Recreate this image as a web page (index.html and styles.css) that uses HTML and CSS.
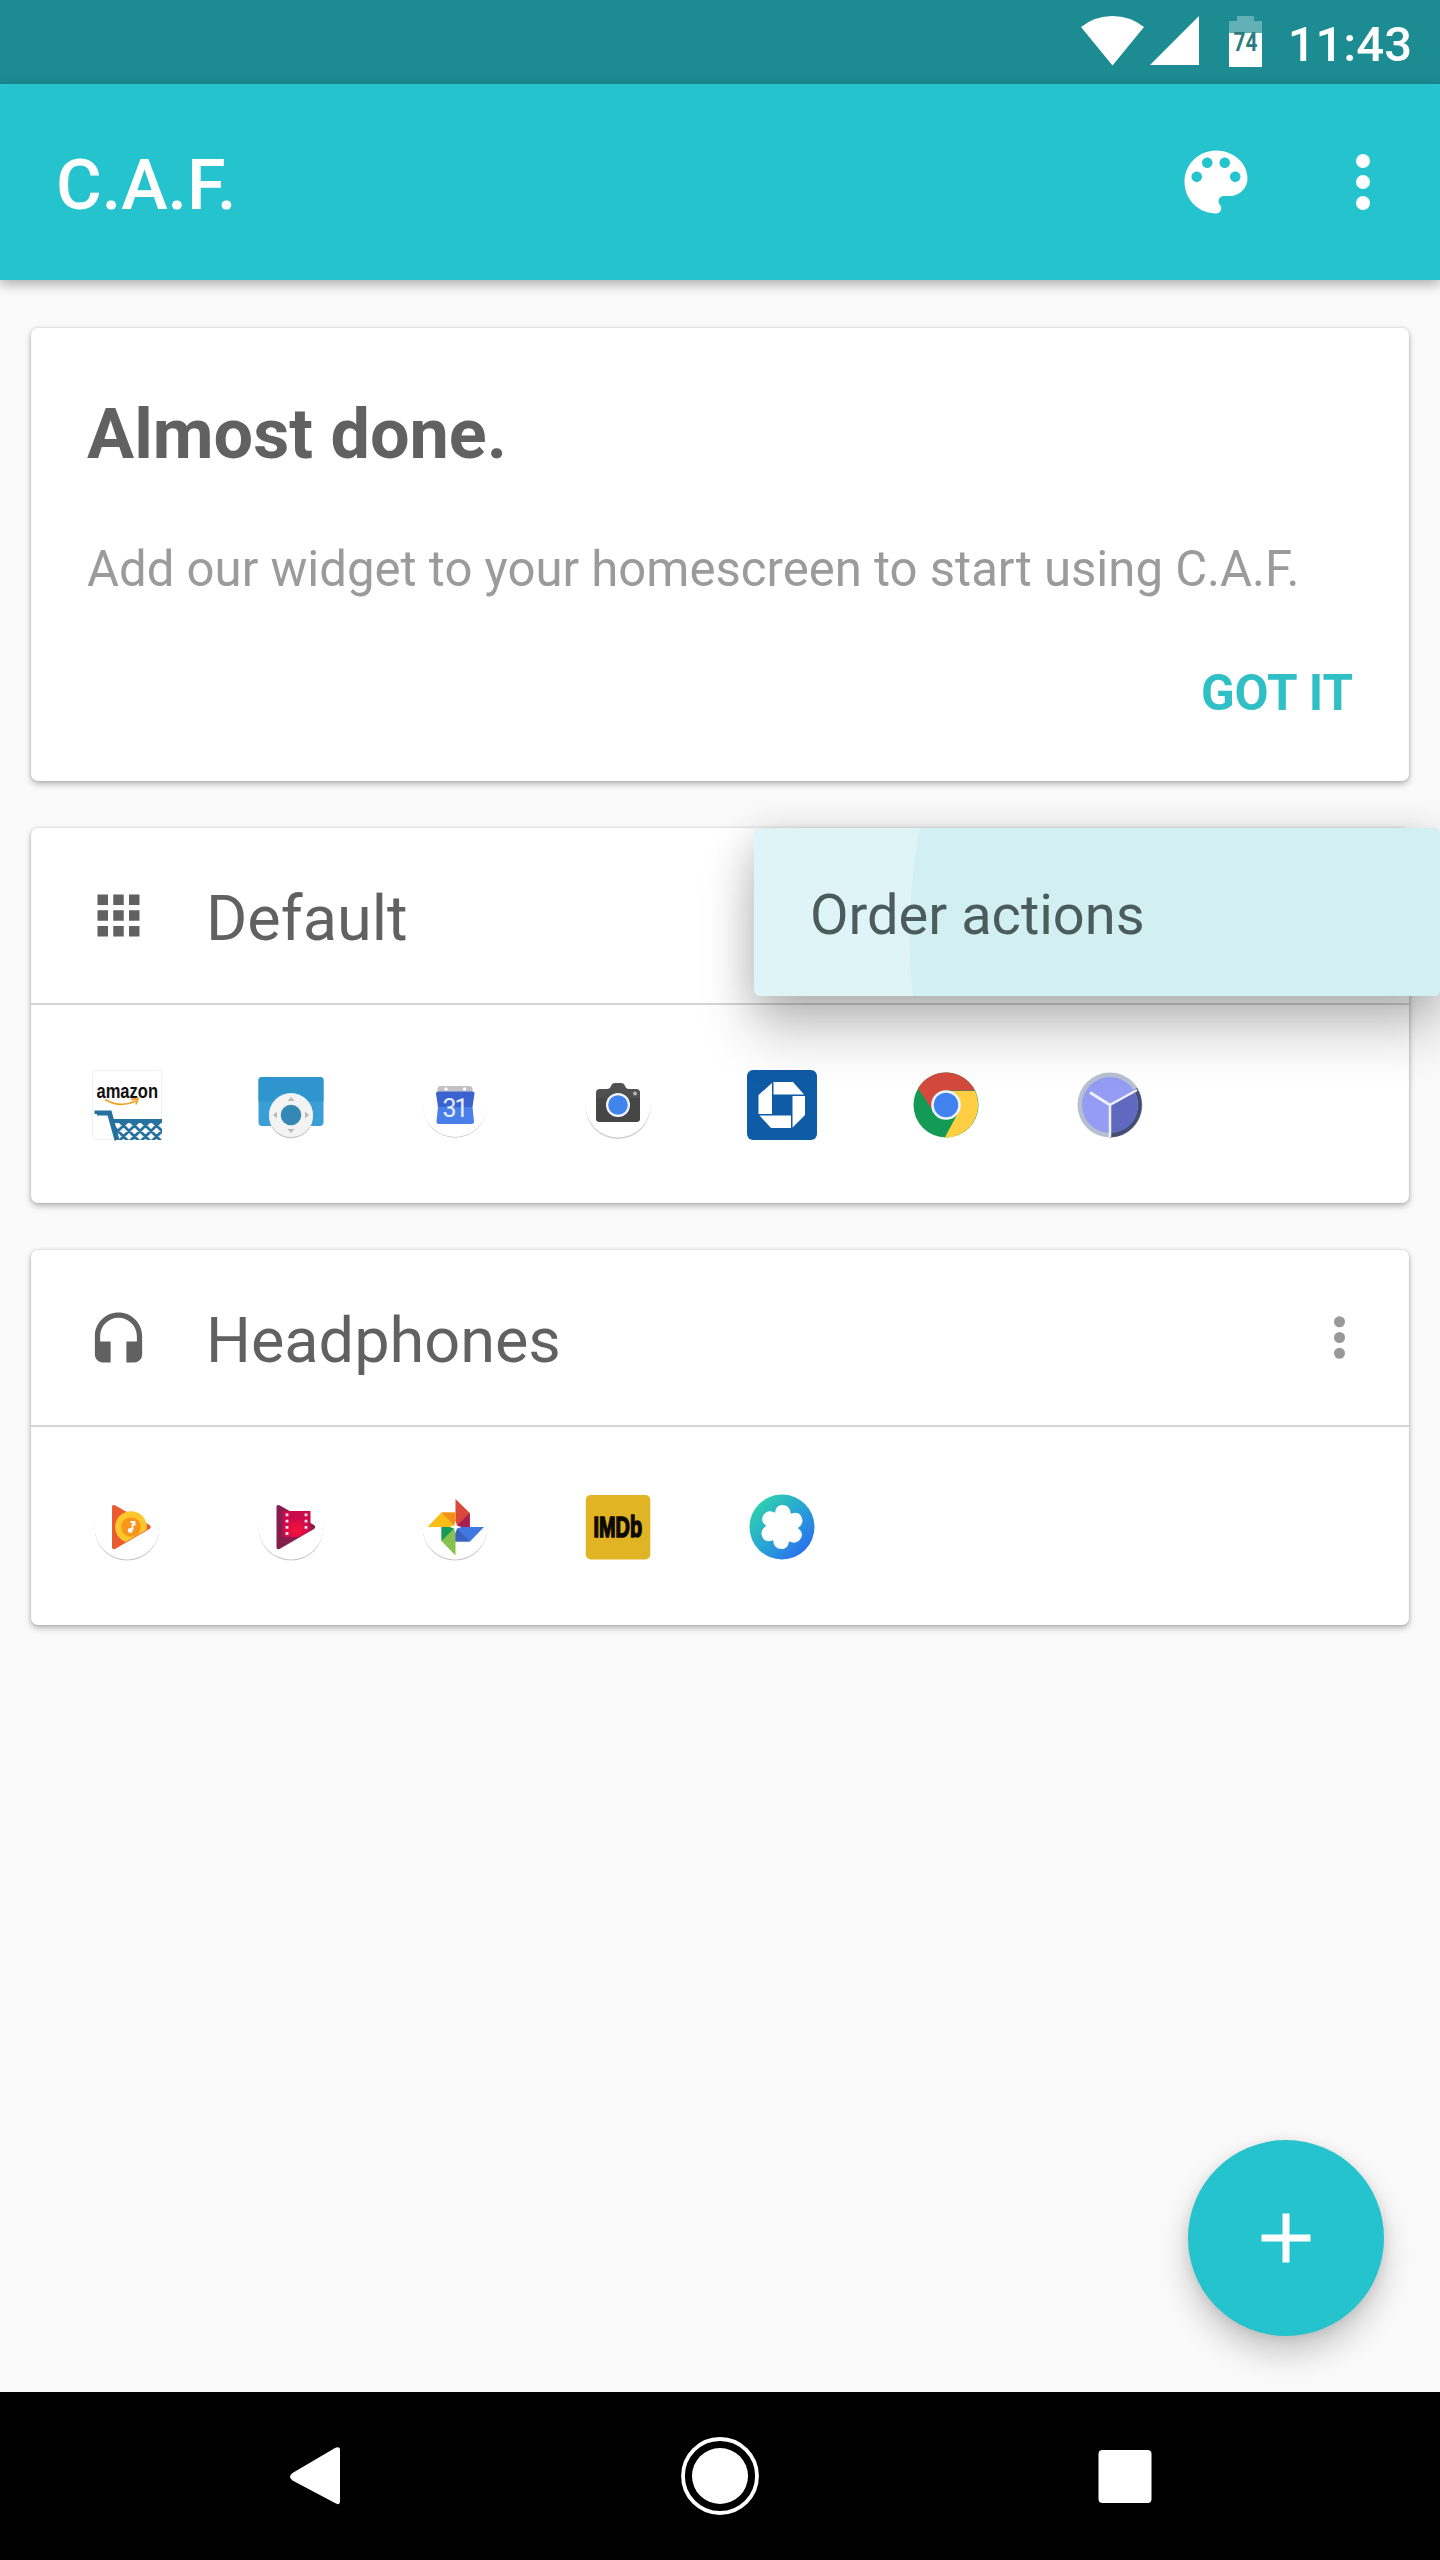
FILE: index.html
```html
<!DOCTYPE html>
<html lang="en">
<head>
  <meta charset="UTF-8">
  <title>C.A.F.</title>
  <link rel="stylesheet" href="styles.css">
</head>
<body>

  <div class="status-bar">
    <svg class="wifi" width="63" height="50" viewBox="0 0 63 50"><path fill="#fff" d="M0 11Q14 0 31.500 0T63 11L31.500 49.500z"/></svg>
    <svg class="signal" width="50" height="50" viewBox="0 0 50 50"><path fill="#fff" d="M49 0v49H0z"/></svg>
    <svg class="battery" width="33" height="51" viewBox="0 0 33 51">
      <path fill="#62b0b5" d="M8 0h17v5h8v12H0V5h8z"/>
      <path fill="#fff" d="M0 17h33v34H0z"/>
      <text x="4.500" y="35" font-size="26" textLength="24" lengthAdjust="spacingAndGlyphs">74</text>
    </svg>
    <span class="time">11:43</span>
  </div>

  <header class="toolbar">
    <h1>C.A.F.</h1>
    <svg width="84" height="84" viewBox="0 0 24 24"><path fill="#fff" d="M12 3c-4.970 0-9 4.030-9 9s4.030 9 9 9c.83 0 1.500-.67 1.500-1.500 0-.39-.15-.74-.39-1.010-.23-.26-.38-.61-.38-.99 0-.83.67-1.500 1.500-1.500H16c2.760 0 5-2.240 5-5 0-4.420-4.030-8-9-8zm-5.500 9c-.83 0-1.500-.67-1.500-1.500S5.670 9 6.500 9 8 9.670 8 10.500 7.330 12 6.500 12zm3-4C8.670 8 8 7.330 8 6.500S8.670 5 9.500 5s1.500.67 1.500 1.500S10.330 8 9.500 8zm5 0c-.83 0-1.500-.67-1.500-1.500S13.670 5 14.500 5s1.500.67 1.500 1.500S15.330 8 14.500 8zm3 4c-.83 0-1.500-.67-1.500-1.500S16.670 9 17.500 9s1.500.67 1.500 1.500-.67 1.500-1.500 1.500z"/></svg>
    <svg width="84" height="84" viewBox="0 0 24 24" fill="#fff"><circle cx="12" cy="6" r="2"/><circle cx="12" cy="12" r="2"/><circle cx="12" cy="18" r="2"/></svg>
  </header>

  <main class="content">
    <section class="card tip">
      <h2>Almost done.</h2>
      <p>Add our widget to your homescreen to start using C.A.F.</p>
      <button>GOT IT</button>
    </section>

    <section class="card">
      <div class="card-head">
        <svg width="63" height="63" viewBox="0 0 24 24"><path fill="#616161" d="M4 8h4V4H4v4zm6 12h4v-4h-4v4zm-6 0h4v-4H4v4zm0-6h4v-4H4v4zm6 0h4v-4h-4v4zm6-10v4h4V4h-4zm-6 4h4V4h-4v4zm6 6h4v-4h-4v4zm0 6h4v-4h-4v4z"/></svg>
        <h3>Default</h3>
      </div>
      <div class="apps">
        <!-- amazon -->
        <svg viewBox="0 0 70 70">
          <defs><clipPath id="basket"><path d="M21 50h49v20H26z"/></clipPath></defs>
          <rect x=".5" y=".5" width="69" height="69" rx="2" fill="#fff" stroke="#f1f1f1"/>
          <text class="amazon" x="4.500" y="27.500" textLength="61.500" lengthAdjust="spacingAndGlyphs">amazon</text>
          <path d="M13 29.500q15 9 31 1.500M39 29.500l7-1-2 6" fill="none" stroke="#f0a024" stroke-width="1.800"/>
          <g fill="none" stroke="#25719f">
            <path d="M5 44v-1h12.500L25 70" stroke-width="5"/>
            <path d="M20 51h50" stroke-width="4"/>
            <path clip-path="url(#basket)" stroke-width="2.800" d="M15 50l22 22M26 50l22 22M37 50l22 22M48 50l22 22M59 50l22 22M37 50L15 72M48 50L26 72M59 50L37 72M70 50L48 72M81 50L59 72"/>
          </g>
        </svg>
        <!-- remote -->
        <svg viewBox="0 0 70 70">
          <rect x="2.500" y="7" width="65" height="49" rx="4" fill="#3a9fd5"/>
          <path d="M2.500 10q0-3 4-3h57q4 0 4 3v21.500h-65z" fill="#2f96cd"/>
          <circle cx="35" cy="46.500" r="22" fill="#c9cdcf"/>
          <circle cx="35" cy="45" r="22" fill="#f3f3f3"/>
          <circle cx="35" cy="45" r="10.300" fill="#3488b3"/>
          <path fill="#b9b9b9" d="M31.500 31l3.500-4 3.500 4zM31.500 59l3.500 4 3.500-4zM21 41.500L17 45l4 3.500zM49 41.500l4 3.500-4 3.500z"/>
        </svg>
        <!-- calendar -->
        <svg viewBox="0 0 70 70">
          <circle cx="35" cy="35.800" r="32" fill="#c4c4c4"/><circle cx="35" cy="34.500" r="32.400" fill="#fff"/>
          <path d="M17.500 22v-3q0-3 3-3h29q3 0 3 3v3z" fill="#c2c2c6"/>
          <circle cx="26" cy="19" r="1.700" fill="#fff"/><circle cx="44.500" cy="19" r="1.700" fill="#fff"/>
          <path d="M16 23.500q0-2 2-2h34.500q2 0 2 2l-2 13.500h-34.500z" fill="#3a63cf"/>
          <path d="M18 37h34.500l1.500 14.500q0 2.500-2.500 2.500H19q-2.500 0-2.500-2.500z" fill="#4a7ee9"/>
          <text x="22.500" y="47" font-size="25" fill="#e6edfc" textLength="26">31</text>
        </svg>
        <!-- camera -->
        <svg viewBox="0 0 70 70">
          <circle cx="35" cy="36.500" r="32.500" fill="#cfcfcf"/><circle cx="35" cy="35" r="32.500" fill="#fff"/>
          <path d="M17 19h7q3 0 4-3t4-3h6q3 0 4 3t4 3h7q4 0 4 3.500v25.700q0 3.500-4 3.500H17q-4 0-4-3.500V22.500q0-3.500 4-3.500z" fill="#505050"/>
          <path d="M13 28h44v20.500q0 3.500-4 3.500H17q-4 0-4-3.500z" fill="#464646"/>
          <circle cx="35" cy="35" r="12" fill="#f4f8ff"/><circle cx="35" cy="35" r="9.800" fill="#4284ee"/>
          <circle cx="52" cy="23.500" r="2" fill="#b5b5b5"/>
        </svg>
        <!-- chase -->
        <svg viewBox="0 0 70 70">
          <rect width="70" height="70" rx="6" fill="#105ba6"/>
          <path fill="#fff" d="M26.500 12H46l11 12.500H26.500zM45.500 26H58v19L45.500 57.500zM44 45.500V58H24L12.500 45.500zM25 13v31H11.500V25z"/>
        </svg>
        <!-- chrome -->
        <svg viewBox="0 0 70 70">
          <circle cx="35" cy="35" r="32.500" fill="#139b55"/>
          <path d="M35 21h28.900A32.500 32.500 0 0 1 33.800 67.500L47 43z" fill="#ffce42"/>
          <path d="M35 35L22.500 41.500 7 18.500A32.500 32.500 0 0 1 64 20.500H35z" fill="#d34a3d"/>
          <circle cx="35" cy="35" r="14.800" fill="#eef4fd"/><circle cx="35" cy="35" r="12.200" fill="#4282ee"/>
        </svg>
        <!-- clock -->
        <svg viewBox="0 0 70 70">
          <circle cx="35" cy="35" r="32.500" fill="#b7c0d0"/>
          <path d="M35 35l27-17A32.500 32.500 0 0 1 35 67.500z" fill="#434e72"/>
          <circle cx="35" cy="35" r="28" fill="#949cf4"/>
          <path d="M35 35l24-14A28 28 0 0 1 35 63z" fill="#5f69bf"/>
          <path d="M35 67V35l27-15" fill="none" stroke="#eef0fa" stroke-width="2.500"/>
          <path d="M15 22.500L35 35" stroke="#eef0fa" stroke-width="3"/>
        </svg>
      </div>
      <div class="popup-menu"><div class="ripple"></div><span>Order actions</span></div>
    </section>

    <section class="card">
      <div class="card-head">
        <svg width="63" height="63" viewBox="0 -1.500 24 24"><path fill="#616161" d="M12 1c-4.970 0-9 4.030-9 9v7c0 1.660 1.340 3 3 3h3v-8H5v-2c0-3.870 3.130-7 7-7s7 3.130 7 7v2h-4v8h3c1.660 0 3-1.340 3-3v-7c0-4.970-4.030-9-9-9z"/></svg>
        <h3>Headphones</h3>
        <svg width="63" height="63" viewBox="0 0 24 24" fill="#999"><circle cx="12" cy="6" r="2.100"/><circle cx="12" cy="12" r="2.100"/><circle cx="12" cy="18" r="2.100"/></svg>
      </div>
      <div class="apps">
        <!-- play music -->
        <svg viewBox="0 0 70 70">
          <defs><clipPath id="play"><path d="M0 0h70v28.800L20 58z"/></clipPath></defs>
          <circle cx="35" cy="36.300" r="32.300" fill="#c8c8c8"/><circle cx="35" cy="35" r="32.500" fill="#fff"/>
          <path d="M20 15q0-3 3-1.700L57.500 33q2.500 2 0 4L23 57q-3 1-3-1.700z" fill="#ea5b2f"/>
          <circle cx="39" cy="35" r="15.800" fill="#fdc72c" clip-path="url(#play)"/>
          <circle cx="39" cy="35" r="9.800" fill="#f8951d"/>
          <path d="M38.500 30h4v2.500h-2V38" fill="none" stroke="#fff" stroke-width="1.800"/><circle cx="38.300" cy="38.500" r="2.400" fill="#fff"/>
        </svg>
        <!-- play movies -->
        <svg viewBox="0 0 70 70">
          <defs>
            <clipPath id="film"><path d="M0 0h70v29.500L20 58z"/></clipPath>
            <radialGradient id="red" cy=".75"><stop offset="0" stop-color="#f8133b"/><stop offset="1" stop-color="#cb0a4c"/></radialGradient>
          </defs>
          <circle cx="35" cy="36.300" r="32.300" fill="#c8c8c8"/><circle cx="35" cy="35" r="32.500" fill="#fff"/>
          <path d="M20.500 15q0-3 3-1.700L58 33q2.500 2 0 4L23.500 57q-3 1-3-1.700z" fill="#851d4d"/>
          <g clip-path="url(#film)">
            <path d="M26.500 19h28v26h-28z" fill="url(#red)"/>
            <path d="M31 21.500v22M50 21.500v16" stroke="#ffe3ea" stroke-width="2.800" stroke-dasharray="2.800 3.400"/>
          </g>
        </svg>
        <!-- photos -->
        <svg viewBox="0 0 70 70">
          <circle cx="35" cy="36.300" r="32.300" fill="#c8c8c8"/><circle cx="35" cy="35" r="32.500" fill="#fff"/>
          <path d="M35.500 7l14.300 14v14H35.500z" fill="#d9483b"/><path d="M35.500 35l14.300-14v14z" fill="#a61f53"/>
          <path d="M7.500 35l14-14.500h14V35z" fill="#f9bd16"/><path d="M35.500 35l-14-14.500h14z" fill="#f28e1e"/>
          <path d="M35.500 35v28.500L21.500 49V35z" fill="#86c34c"/><path d="M35.500 35l-14 14V35z" fill="#159a58"/>
          <path d="M35.500 35H64L50 49.500H35.500z" fill="#4277df"/><path d="M35.500 35L50 49.500H35.500z" fill="#3961be"/>
          <path d="M35.500 29l1.500 4.500 4.500 1.500-4.500 1.500-1.500 4.500-1.500-4.500-4.500-1.500 4.500-1.500z" fill="#fff"/>
        </svg>
        <!-- imdb -->
        <svg viewBox="0 0 70 70">
          <rect x="2.800" y="3" width="64.500" height="64.500" rx="5" fill="#e0b424"/>
          <text class="imdb" x="10.500" y="45" textLength="48.500" lengthAdjust="spacingAndGlyphs">IMDb</text>
        </svg>
        <!-- pinwheel -->
        <svg viewBox="0 0 70 70">
          <defs><linearGradient id="aqua" x1="0" y1="0" x2="1" y2="1"><stop offset=".1" stop-color="#2fd3ab"/><stop offset=".5" stop-color="#28a5d4"/><stop offset=".9" stop-color="#2b6cf0"/></linearGradient></defs>
          <circle cx="35" cy="35" r="32.500" fill="url(#aqua)"/>
          <g fill="#fff">
            <circle cx="35" cy="35" r="13"/>
            <path id="petal" d="M28 26q-1-12.500 7-13 8.500 0 9 9.500 0 6-5 10z"/>
            <use href="#petal" transform="rotate(60 35 35)"/>
            <use href="#petal" transform="rotate(120 35 35)"/>
            <use href="#petal" transform="rotate(180 35 35)"/>
            <use href="#petal" transform="rotate(240 35 35)"/>
            <use href="#petal" transform="rotate(300 35 35)"/>
          </g>
        </svg>
      </div>
    </section>
  </main>

  <button class="fab">
    <svg width="84" height="84" viewBox="0 0 24 24"><path fill="#fff" d="M19 13h-6v6h-2v-6H5v-2h6V5h2v6h6v2z"/></svg>
  </button>

  <nav class="nav-bar">
    <svg width="84" height="84" viewBox="0 0 84 84"><path fill="#fff" d="M19.500 39L62 14q5-2 5 2v51q0 5-5 2L19.500 46.500q-5-4 0-7.500z"/></svg>
    <svg width="84" height="84" viewBox="0 0 84 84"><circle cx="42" cy="42" r="37" fill="none" stroke="#fff" stroke-width="3.800"/><circle cx="42" cy="42" r="28" fill="#fff"/></svg>
    <svg width="84" height="84" viewBox="0 0 84 84"><rect x="15.500" y="16" width="53" height="53" rx="4" fill="#fff"/></svg>
  </nav>

</body>
</html>
```
FILE: styles.css
```css
* {
  box-sizing: border-box;
}

body {
  margin: 0;
  width: 1440px;
  height: 2560px;
  display: flex;
  flex-direction: column;
  position: relative;
  overflow: hidden;
  background: #fafafa;
  font-family: Roboto, sans-serif;
  color: #616161;
}

svg {
  display: block;
  flex: none;
  overflow: visible;
}

h1, h2, h3, p {
  margin: 0;
}

button {
  border: none;
  padding: 0;
  background: none;
  font-family: inherit;
  cursor: pointer;
}

/* top */
.status-bar {
  height: 84px;
  padding: 16px 28px 0 0;
  display: flex;
  justify-content: flex-end;
  align-items: flex-start;
  background: #1c8b92;
}

.signal {
  margin-left: 6px;
}

.battery {
  margin-left: 29px;
}

.battery text {
  font-weight: 700;
  fill: #2b7b80;
}

.time {
  margin-left: 26px;
  font-size: 49px;
  font-weight: 500;
  line-height: 57px;
  color: #fff;
}

.toolbar {
  height: 196px;
  padding: 0 35px 0 56px;
  display: flex;
  align-items: center;
  gap: 63px;
  background: #25c3cd;
  box-shadow: 0 4px 12px rgba(0, 0, 0, 0.32);
}

.toolbar h1 {
  flex: 1;
  padding-top: 5px;
  font-size: 70px;
  font-weight: 500;
  color: #fff;
}

/* cards */
.content {
  flex: 1;
  padding: 48px 31px 0;
  display: flex;
  flex-direction: column;
  gap: 47px;
}

.card {
  position: relative;
  background: #fff;
  border-radius: 7px;
  box-shadow: 0 3px 6px rgba(0, 0, 0, 0.28), 0 0 3px rgba(0, 0, 0, 0.16);
}

.tip {
  height: 453px;
  padding: 65px 56px 0;
  display: flex;
  flex-direction: column;
}

.tip h2 {
  font-size: 70.2px;
  font-weight: 700;
  line-height: 82px;
}

.tip p {
  margin-top: 65px;
  font-size: 49.1px;
  line-height: 58px;
  color: #9b9b9b;
  white-space: nowrap;
}

.tip button {
  margin-top: 66px;
  align-self: flex-end;
  font-size: 49.4px;
  font-weight: 700;
  line-height: 58px;
  color: #2fbfc5;
}

.card-head {
  height: 177px;
  padding: 0 38px 0 56px;
  display: flex;
  align-items: center;
  border-bottom: 2px solid #d5d5d5;
}

.card-head h3 {
  flex: 1;
  margin-left: 56px;
  padding-top: 5px;
  font-size: 63px;
  font-weight: 400;
}

.apps {
  height: 198px;
  padding: 2px 61px 0;
  display: flex;
  align-items: center;
  gap: 93.8px;
}

.apps svg {
  width: 70px;
  height: 70px;
}

.amazon {
  font: 700 20px "Liberation Sans", sans-serif;
  fill: #111;
}

.imdb {
  font: 700 29px "Liberation Sans", sans-serif;
  fill: #0d0a02;
  stroke: #0d0a02;
  stroke-width: 1.6px;
}

/* menu opened over the first card */
.popup-menu {
  position: absolute;
  top: 0;
  left: 723px;
  width: 686px;
  height: 168px;
  padding: 5px 56px 0;
  display: flex;
  align-items: center;
  background: #dff4f6;
  border-radius: 6px;
  box-shadow: 0 36px 56px rgba(0, 0, 0, 0.22), 0 6px 40px rgba(0, 0, 0, 0.16);
  font-size: 56px;
  color: #4c5c5d;
}

.popup-menu span {
  position: relative;
}

.ripple {
  position: absolute;
  inset: 0;
  border-radius: 6px;
  background: radial-gradient(circle 550px at 705px 107px, #d2f0f2 99.8%, transparent 100%);
}

/* bottom */
.fab {
  position: absolute;
  right: 56px;
  bottom: 224px;
  width: 196px;
  height: 196px;
  display: flex;
  align-items: center;
  justify-content: center;
  border-radius: 50%;
  background: #25c3cd;
  box-shadow: 0 18px 32px rgba(0, 0, 0, 0.2), 0 2px 12px rgba(0, 0, 0, 0.1);
}

.nav-bar {
  height: 168px;
  display: grid;
  grid-template-columns: repeat(3, 405px);
  place-content: center;
  justify-items: center;
  background: #000;
}
```
